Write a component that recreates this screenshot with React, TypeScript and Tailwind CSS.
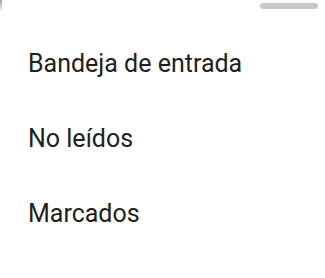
const items = ["Bandeja de entrada", "No leídos", "Marcados"];

export default function App() {
  return (
    <div className="relative w-[325px] h-[278px] bg-white overflow-hidden" style={{ fontFamily: "Roboto, 'Noto Sans', sans-serif" }}>
      <div className="absolute left-0 top-0 w-[1.5px] h-[12px] bg-gradient-to-b from-[#9e9e9e] to-white" />
      <div className="flex justify-end pt-[3px] pr-[7px]">
        <div className="w-[58px] h-[6px] rounded-full bg-[#c9c9c9]" />
      </div>
      <ul className="mt-[17px]">
        {items.map((label) => (
          <li key={label} className="h-[75px] flex items-center pl-[28px] text-[25px] text-[#212121] leading-none">
            {label}
          </li>
        ))}
      </ul>
    </div>
  );
}
